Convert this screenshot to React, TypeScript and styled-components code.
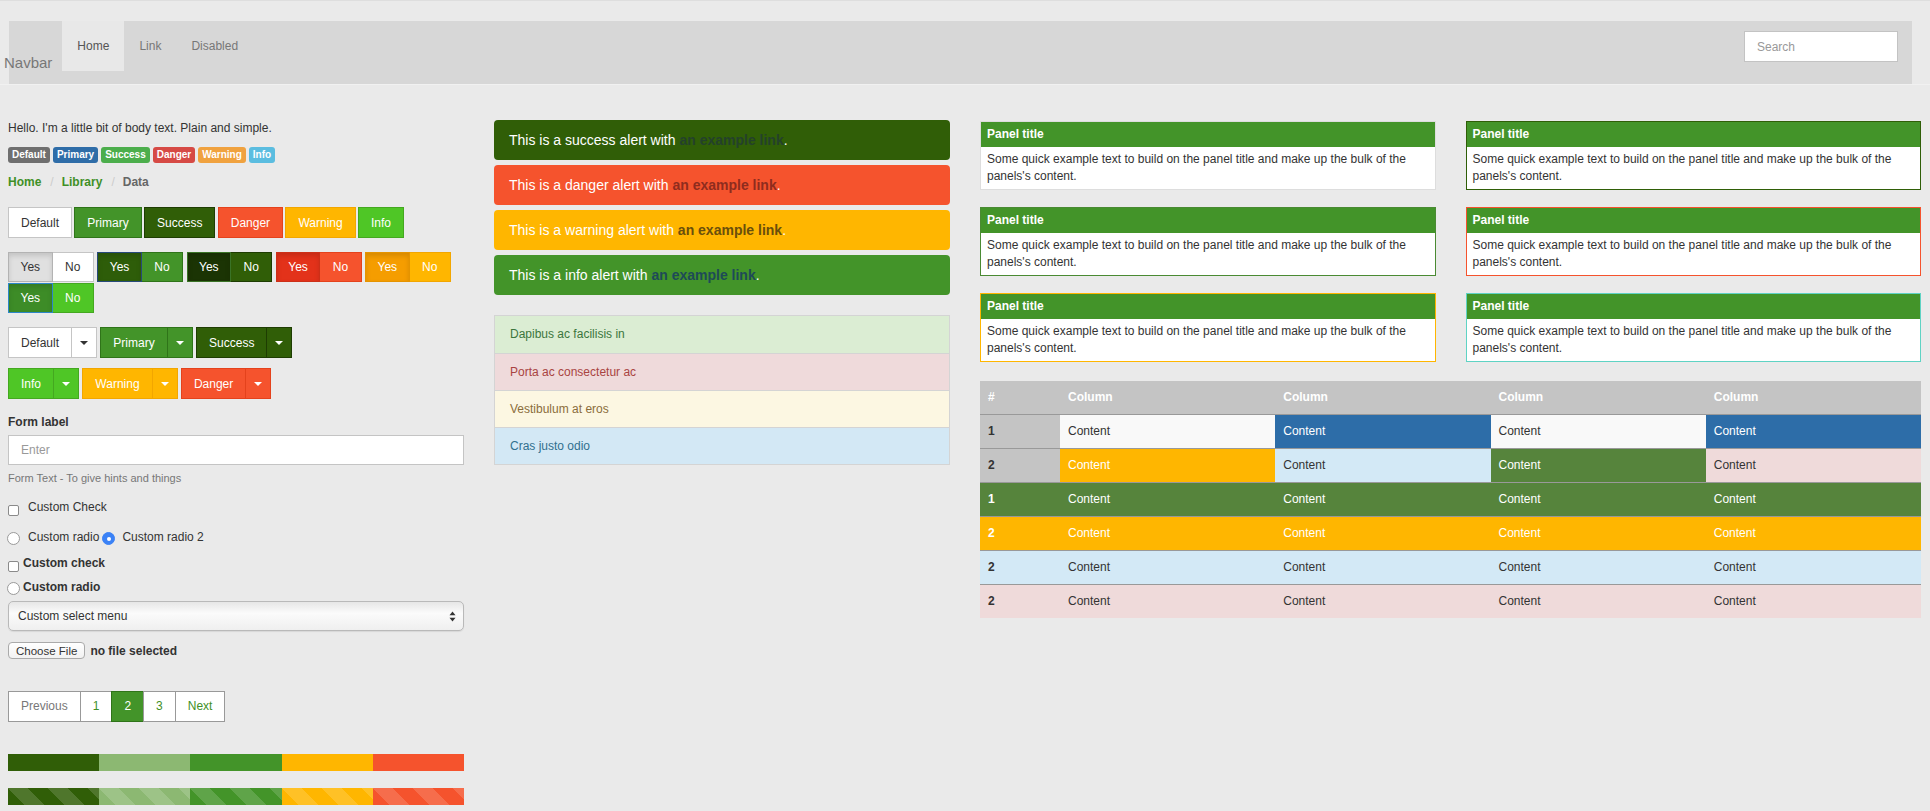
import React from 'react'
import styled, { createGlobalStyle, css } from 'styled-components'

// Theme sampler: navbar, buttons, forms, alerts, panels and a contextual table.

type Variant = 'default' | 'primary' | 'success' | 'danger' | 'warning' | 'info'

const btnColors: Record<Variant, { bg: string; border: string; color: string; activeBg: string; activeBorder: string }> = {
  default: { bg: '#ffffff', border: '#c5c5c5', color: '#333333', activeBg: '#e0e0e0', activeBorder: '#b3b3b3' },
  primary: { bg: '#439429', border: '#2f7419', color: '#ffffff', activeBg: '#2e5d09', activeBorder: '#27497a' },
  success: { bg: '#305e07', border: '#1e3d02', color: '#ffffff', activeBg: '#1b3404', activeBorder: '#3a7326' },
  danger: { bg: '#f5532d', border: '#e4421c', color: '#ffffff', activeBg: '#e3321a', activeBorder: '#cc3018' },
  warning: { bg: '#ffb600', border: '#f2a600', color: '#ffffff', activeBg: '#f59d00', activeBorder: '#e59300' },
  info: { bg: '#4fc626', border: '#44a820', color: '#ffffff', activeBg: '#3d8c27', activeBorder: '#2c86c8' },
}

const GlobalStyle = createGlobalStyle`
  html, body {
    margin: 0;
    padding: 0;
  }
  body {
    background: #eaeaea;
    font-family: "Liberation Sans", Arial, Helvetica, sans-serif;
    font-size: 12px;
    color: #333333;
  }
  * {
    box-sizing: border-box;
  }
`

const Page = styled.div`
  border-top: 1px solid #dedede;
  min-height: 810px;
`

const Header = styled.header`
  padding: 20px 18px 0 9px;
  border-bottom: 1px solid #f1f1f1;
`

const Navbar = styled.nav`
  display: flex;
  align-items: flex-start;
  height: 63px;
  background: #d7d7d7;
`

const Brand = styled.a`
  margin: 32px 10px 0 -5px;
  font-size: 15px;
  line-height: 20px;
  color: #777777;
  text-decoration: none;
`

const NavList = styled.div`
  display: flex;
`

const NavItem = styled.a<{ $active?: boolean }>`
  height: 50px;
  line-height: 50px;
  padding: 0 15px;
  color: ${(p) => (p.$active ? '#555555' : '#777777')};
  background: ${(p) => (p.$active ? '#e8e8e8' : 'transparent')};
  text-decoration: none;
`

const Search = styled.input`
  margin: 10px 14px 0 auto;
  width: 154px;
  height: 31px;
  border: 1px solid #c3c3c3;
  background: #ffffff;
  padding: 0 12px;
  font: inherit;
  font-size: 12px;
  outline: none;
  &::placeholder {
    color: #999999;
  }
`

const Main = styled.main`
  display: grid;
  grid-template-columns: 456px 456px 941px;
  column-gap: 30px;
  padding: 35px 9px 0 8px;
`

const Column = styled.section`
  display: flex;
  flex-direction: column;
  align-items: stretch;
  min-width: 0;
`

const BodyText = styled.p`
  margin: 0;
  line-height: 17px;
`

const Badges = styled.div`
  display: flex;
  gap: 3px;
  margin-top: 10px;
`

const badgeBg: Record<Variant, string> = {
  default: '#6f6f6f',
  primary: '#2f6da8',
  success: '#4cae4c',
  danger: '#d64a45',
  warning: '#f0a23f',
  info: '#5bbde0',
}

const Badge = styled.span<{ $variant: Variant }>`
  height: 16px;
  line-height: 16px;
  padding: 0 4px;
  border-radius: 3px;
  font-size: 10px;
  font-weight: 700;
  color: #ffffff;
  background: ${(p) => badgeBg[p.$variant]};
`

const Breadcrumb = styled.div`
  display: flex;
  margin-top: 11px;
  line-height: 17px;
  font-weight: 700;
`

const Crumb = styled.a<{ $current?: boolean }>`
  color: ${(p) => (p.$current ? '#666666' : '#3f9027')};
  text-decoration: none;
`

const CrumbSep = styled.span`
  padding: 0 8px 0 9px;
  color: #cccccc;
  font-weight: 400;
`

const Row = styled.div<{ $mt: number; $wrap?: boolean }>`
  display: flex;
  flex-wrap: ${(p) => (p.$wrap ? 'wrap' : 'nowrap')};
  column-gap: 3.34px;
  row-gap: 1px;
  margin-top: ${(p) => p.$mt}px;
`

const Btn = styled.button<{ $variant: Variant; $active?: boolean; $h?: number; $px?: number }>`
  display: inline-flex;
  align-items: center;
  justify-content: center;
  height: ${(p) => p.$h ?? 31}px;
  padding: 0 ${(p) => p.$px ?? 12}px;
  border: 1px solid ${(p) => btnColors[p.$variant].border};
  border-radius: 0;
  background: ${(p) => btnColors[p.$variant].bg};
  color: ${(p) => btnColors[p.$variant].color};
  font-family: inherit;
  font-size: 12px;
  cursor: pointer;
  position: relative;
  ${(p) =>
    p.$active &&
    css`
      background: ${btnColors[p.$variant].activeBg};
      border-color: ${btnColors[p.$variant].activeBorder};
      box-shadow: inset 0 3px 5px rgba(0, 0, 0, 0.125);
      z-index: 1;
    `}
  & + & {
    margin-left: -1px;
  }
`

const Group = styled.div`
  display: flex;
`

const Caret = styled.span<{ $dark?: boolean }>`
  width: 0;
  height: 0;
  border-top: 4px solid ${(p) => (p.$dark ? '#333333' : '#ffffff')};
  border-left: 4px solid transparent;
  border-right: 4px solid transparent;
`

const FormLabel = styled.label`
  display: block;
  margin-top: 15px;
  line-height: 17px;
  font-weight: 700;
`

const TextInput = styled.input`
  margin-top: 4px;
  width: 100%;
  height: 30px;
  border: 1px solid #c4c4c4;
  background: #ffffff;
  padding: 0 12px;
  font: inherit;
  font-size: 12px;
  outline: none;
  &::placeholder {
    color: #999999;
  }
`

const HelpText = styled.small`
  display: block;
  margin-top: 5px;
  line-height: 16px;
  font-size: 11px;
  color: #777777;
`

const CheckRow = styled.label<{ $mt: number; $bold?: boolean }>`
  display: flex;
  align-items: center;
  margin-top: ${(p) => p.$mt}px;
  line-height: 17px;
  font-weight: ${(p) => (p.$bold ? 700 : 400)};
`

const Box = styled.span<{ $gap: number; $low?: boolean }>`
  flex: none;
  width: 11px;
  height: 11px;
  margin: ${(p) => (p.$low ? '6px' : '2px')} ${(p) => p.$gap}px 0 0;
  align-self: flex-start;
  border: 1px solid #8a8a8a;
  border-radius: 2px;
  background: #ffffff;
`

const Radio = styled.span<{ $gap: number; $checked?: boolean; $before?: number }>`
  flex: none;
  width: 13px;
  height: 13px;
  margin: 2px ${(p) => p.$gap}px 0 ${(p) => p.$before ?? -1}px;
  border-radius: 50%;
  border: 1px solid ${(p) => (p.$checked ? '#3b82f6' : '#9a9a9a')};
  background: ${(p) => (p.$checked ? '#3b82f6' : '#ffffff')};
  display: flex;
  align-items: center;
  justify-content: center;
  &::after {
    content: '';
    display: ${(p) => (p.$checked ? 'block' : 'none')};
    width: 4px;
    height: 4px;
    border-radius: 50%;
    background: #ffffff;
  }
`

const SelectBox = styled.div`
  display: flex;
  align-items: center;
  justify-content: space-between;
  margin-top: 5px;
  height: 30px;
  padding: 0 7px 0 9px;
  border: 1px solid #b9b9b9;
  border-radius: 5px;
  background: linear-gradient(#e6e6e6, #fbfbfb 40%, #efefef);
  box-shadow: 0 1px 1px rgba(0, 0, 0, 0.08);
  color: #333333;
`

const FileRow = styled.div`
  display: flex;
  align-items: center;
  gap: 5px;
  margin-top: 11px;
  font-weight: 700;
`

const FileButton = styled.button`
  height: 17px;
  padding: 0 7px;
  border: 1px solid #aaaaaa;
  border-radius: 4px;
  background: linear-gradient(#ffffff, #f2f2f2);
  font-family: inherit;
  font-size: 11.5px;
  color: #333333;
`

const Pagination = styled.div`
  display: flex;
  margin-top: 32px;
`

const PageLink = styled.a<{ $active?: boolean; $disabled?: boolean }>`
  height: 31px;
  line-height: 29px;
  padding: 0 12px;
  border: 1px solid ${(p) => (p.$active ? '#2f7419' : '#999999')};
  background: ${(p) => (p.$active ? '#439429' : '#ffffff')};
  color: ${(p) => (p.$active ? '#ffffff' : p.$disabled ? '#777777' : '#3f9027')};
  text-decoration: none;
  & + & {
    margin-left: -1px;
  }
`

const Progress = styled.div<{ $mt: number }>`
  display: flex;
  height: 17px;
  margin-top: ${(p) => p.$mt}px;
`

const Bar = styled.div<{ $color: string; $striped?: boolean }>`
  flex: 1;
  background-color: ${(p) => p.$color};
  ${(p) =>
    p.$striped &&
    css`
      background-image: linear-gradient(
        45deg,
        rgba(255, 255, 255, 0.15) 25%,
        transparent 25%,
        transparent 50%,
        rgba(255, 255, 255, 0.15) 50%,
        rgba(255, 255, 255, 0.15) 75%,
        transparent 75%,
        transparent
      );
      background-size: 40px 40px;
    `}
`

const alertTones = {
  success: { bg: '#305e07', link: '#24412b' },
  danger: { bg: '#f5532d', link: '#8e2c1e' },
  warning: { bg: '#ffb600', link: '#6a4f0c' },
  info: { bg: '#439429', link: '#1e4a57' },
}
type AlertTone = keyof typeof alertTones

const Alerts = styled.div`
  display: flex;
  flex-direction: column;
  gap: 5px;
`

const Alert = styled.div<{ $tone: AlertTone }>`
  height: 40px;
  line-height: 40px;
  padding: 0 15px;
  border-radius: 4px;
  background: ${(p) => alertTones[p.$tone].bg};
  color: #ffffff;
  font-size: 14px;

  a {
    color: ${(p) => alertTones[p.$tone].link};
    font-weight: 700;
    text-decoration: none;
  }
`

const listTones = {
  success: { bg: '#dbedd3', color: '#3c763d' },
  danger: { bg: '#efdadb', color: '#a94442' },
  warning: { bg: '#fcf7e2', color: '#8a6d3b' },
  info: { bg: '#d3e8f5', color: '#31708f' },
}
type ListTone = keyof typeof listTones

const ListGroup = styled.ul`
  list-style: none;
  margin: 20px 0 0;
  padding: 0;
  border: 1px solid #d4d4d4;
`

const ListItem = styled.li<{ $tone: ListTone }>`
  height: 37px;
  line-height: 37px;
  padding: 0 15px;
  background: ${(p) => listTones[p.$tone].bg};
  color: ${(p) => listTones[p.$tone].color};
  & + & {
    border-top: 1px solid #d4d4d4;
  }
`

const PanelGrid = styled.div`
  display: grid;
  grid-template-columns: 1fr 1fr;
  gap: 17px 30px;
  margin-top: 1px;
`

const Panel = styled.div<{ $border: string }>`
  border: 1px solid ${(p) => p.$border};
  background: #ffffff;
`

const PanelHeading = styled.div`
  height: 25px;
  line-height: 25px;
  padding: 0 6px;
  background: #439429;
  color: #ffffff;
  font-weight: 700;
`

const PanelBody = styled.div`
  padding: 4px 6px;
  line-height: 17px;
  color: #333333;
`

const tableTones = {
  gray: { bg: '#c4c4c4', color: '#333333' },
  light: { bg: '#f9f9f9', color: '#333333' },
  blue: { bg: '#2d6da8', color: '#ffffff' },
  yellow: { bg: '#ffb600', color: '#ffffff' },
  sky: { bg: '#d3e9f6', color: '#333333' },
  green: { bg: '#56843c', color: '#ffffff' },
  pink: { bg: '#efdada', color: '#333333' },
}
type TableTone = keyof typeof tableTones

const Table = styled.table`
  margin-top: 19px;
  width: 100%;
  border-collapse: collapse;
  table-layout: fixed;
`

const Th = styled.th`
  height: 33px;
  padding: 0 8px;
  background: #c4c4c4;
  color: #ffffff;
  font-weight: 700;
  text-align: left;
`

const Td = styled.td<{ $tone: TableTone; $bold?: boolean }>`
  height: 34px;
  padding: 0 8px;
  border-top: 1px solid #999999;
  background: ${(p) => tableTones[p.$tone].bg};
  color: ${(p) => tableTones[p.$tone].color};
  font-weight: ${(p) => (p.$bold ? 700 : 400)};
`

const SelectArrows = () => (
  <svg width="7" height="11" viewBox="0 0 7 11">
    <path d="M3.5 0.5 L6.5 4.2 L0.5 4.2 Z" fill="#333" />
    <path d="M3.5 10.5 L6.5 6.8 L0.5 6.8 Z" fill="#333" />
  </svg>
)

const solid: Variant[] = ['default', 'primary', 'success', 'danger', 'warning', 'info']

const panelBorders = ['#dddddd', '#2f5e07', '#4a8a33', '#f5532d', '#ffb600', '#5fd3c4']

const tableRows: { n: string; cells: TableTone[]; lead: TableTone }[] = [
  { n: '1', lead: 'gray', cells: ['light', 'blue', 'light', 'blue'] },
  { n: '2', lead: 'gray', cells: ['yellow', 'sky', 'green', 'pink'] },
  { n: '1', lead: 'green', cells: ['green', 'green', 'green', 'green'] },
  { n: '2', lead: 'yellow', cells: ['yellow', 'yellow', 'yellow', 'yellow'] },
  { n: '2', lead: 'sky', cells: ['sky', 'sky', 'sky', 'sky'] },
  { n: '2', lead: 'pink', cells: ['pink', 'pink', 'pink', 'pink'] },
]

const label = (v: Variant) => v.charAt(0).toUpperCase() + v.slice(1)

const SplitButton = ({ variant }: { variant: Variant }) => (
  <Group>
    <Btn $variant={variant}>{label(variant)}</Btn>
    <Btn $variant={variant} $px={8}>
      <Caret $dark={variant === 'default'} />
    </Btn>
  </Group>
)

const App = () => {
  return (
    <Page>
      <GlobalStyle />
      <Header>
        <Navbar>
          <Brand href="#">Navbar</Brand>
          <NavList>
            <NavItem $active href="#">Home</NavItem>
            <NavItem href="#">Link</NavItem>
            <NavItem href="#">Disabled</NavItem>
          </NavList>
          <Search placeholder="Search" />
        </Navbar>
      </Header>

      <Main>
        <Column>
          <BodyText>Hello. I'm a little bit of body text. Plain and simple.</BodyText>
          <Badges>
            {solid.map((v) => (
              <Badge key={v} $variant={v}>
                {label(v)}
              </Badge>
            ))}
          </Badges>
          <Breadcrumb>
            <Crumb href="#">Home</Crumb>
            <CrumbSep>/</CrumbSep>
            <Crumb href="#">Library</Crumb>
            <CrumbSep>/</CrumbSep>
            <Crumb $current>Data</Crumb>
          </Breadcrumb>

          <Row $mt={16}>
            {solid.map((v) => (
              <Btn key={v} $variant={v}>
                {label(v)}
              </Btn>
            ))}
          </Row>

          <Row $mt={14} $wrap>
            {solid.map((v) => (
              <Group key={v}>
                <Btn $variant={v} $active $h={30} $px={11.5}>
                  Yes
                </Btn>
                <Btn $variant={v} $h={30} $px={12.5}>
                  No
                </Btn>
              </Group>
            ))}
          </Row>

          <Row $mt={14}>
            <SplitButton variant="default" />
            <SplitButton variant="primary" />
            <SplitButton variant="success" />
          </Row>
          <Row $mt={10}>
            <SplitButton variant="info" />
            <SplitButton variant="warning" />
            <SplitButton variant="danger" />
          </Row>

          <FormLabel>Form label</FormLabel>
          <TextInput placeholder="Enter" />
          <HelpText>Form Text - To give hints and things</HelpText>

          <CheckRow $mt={13}>
            <Box $gap={9} $low />
            Custom Check
          </CheckRow>
          <CheckRow $mt={13}>
            <Radio $gap={8} />
            Custom radio
            <Radio $gap={7} $checked $before={3} />
            Custom radio 2
          </CheckRow>
          <CheckRow $mt={9} $bold>
            <Box $gap={4} $low />
            Custom check
          </CheckRow>
          <CheckRow $mt={7} $bold>
            <Radio $gap={3} />
            Custom radio
          </CheckRow>

          <SelectBox>
            <span>Custom select menu</span>
            <SelectArrows />
          </SelectBox>

          <FileRow>
            <FileButton>Choose File</FileButton>
            no file selected
          </FileRow>

          <Pagination>
            <PageLink $disabled>Previous</PageLink>
            <PageLink href="#">1</PageLink>
            <PageLink $active href="#">2</PageLink>
            <PageLink href="#">3</PageLink>
            <PageLink href="#">Next</PageLink>
          </Pagination>

          <Progress $mt={32}>
            <Bar $color="#305e07" />
            <Bar $color="#8cb872" />
            <Bar $color="#439429" />
            <Bar $color="#ffb600" />
            <Bar $color="#f5532d" />
          </Progress>
          <Progress $mt={17}>
            <Bar $color="#305e07" $striped />
            <Bar $color="#8cb872" $striped />
            <Bar $color="#439429" $striped />
            <Bar $color="#ffb600" $striped />
            <Bar $color="#f5532d" $striped />
          </Progress>
        </Column>

        <Column>
          <Alerts>
            {(['success', 'danger', 'warning', 'info'] as AlertTone[]).map((t) => (
              <Alert key={t} $tone={t}>
                This is a {t} alert with <a href="#">an example link</a>.
              </Alert>
            ))}
          </Alerts>
          <ListGroup>
            <ListItem $tone="success">Dapibus ac facilisis in</ListItem>
            <ListItem $tone="danger">Porta ac consectetur ac</ListItem>
            <ListItem $tone="warning">Vestibulum at eros</ListItem>
            <ListItem $tone="info">Cras justo odio</ListItem>
          </ListGroup>
        </Column>

        <Column>
          <PanelGrid>
            {panelBorders.map((b, i) => (
              <Panel key={i} $border={b}>
                <PanelHeading>Panel title</PanelHeading>
                <PanelBody>
                  Some quick example text to build on the panel title and make up the bulk of the panels's content.
                </PanelBody>
              </Panel>
            ))}
          </PanelGrid>

          <Table>
            <colgroup>
              <col style={{ width: 80 }} />
              <col />
              <col />
              <col />
              <col />
            </colgroup>
            <thead>
              <tr>
                <Th>#</Th>
                <Th>Column</Th>
                <Th>Column</Th>
                <Th>Column</Th>
                <Th>Column</Th>
              </tr>
            </thead>
            <tbody>
              {tableRows.map((r, i) => (
                <tr key={i}>
                  <Td $tone={r.lead} $bold>
                    {r.n}
                  </Td>
                  {r.cells.map((c, j) => (
                    <Td key={j} $tone={c}>
                      Content
                    </Td>
                  ))}
                </tr>
              ))}
            </tbody>
          </Table>
        </Column>
      </Main>
    </Page>
  )
}

export default App
